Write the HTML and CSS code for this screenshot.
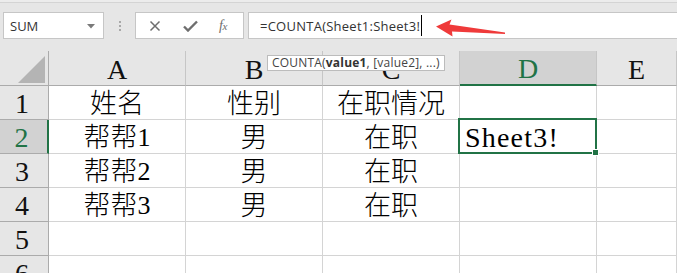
FILE: index.html
```html
<!DOCTYPE html>
<html lang="zh-CN">
<head>
<meta charset="utf-8">
<title>Excel COUNTA</title>
<link rel="stylesheet" href="styles.css">
</head>
<body>
<div class="app">
  <div class="topline"></div>
  <div class="toolbar">
    <div class="namebox">
      <span class="namebox-text">SUM</span>
      <svg class="dropdown" width="8" height="5" viewBox="0 0 8 5"><path d="M0 0H8L4 4.5Z" fill="#7a7a7a"/></svg>
    </div>
    <div class="grip"><i></i><i></i><i></i></div>
    <div class="fxbox">
      <svg class="btn-icon" width="12" height="12" viewBox="0 0 12 12"><path d="M1.5 1.5L10.5 10.5M10.5 1.5L1.5 10.5" stroke="#6e6e6e" stroke-width="1.5" fill="none"/></svg>
      <svg class="btn-icon" width="15" height="12" viewBox="0 0 15 12"><path d="M1 6.5L5 10.5L14 1.5" stroke="#6e6e6e" stroke-width="2.4" fill="none"/></svg>
      <span class="fx">f<span class="fx-x">x</span></span>
    </div>
    <div class="formula">
      <span class="formula-text">=COUNTA(Sheet1:Sheet3!</span><span class="caret"></span>
    </div>
  </div>

  <div class="sheet">
    <div class="hd corner"><span class="tri"></span></div>
    <div class="hd col">A</div>
    <div class="hd col">B</div>
    <div class="hd col">C</div>
    <div class="hd col active-col">D</div>
    <div class="hd col">E</div>

    <div class="hd row">1</div>
    <div class="cell c">姓名</div>
    <div class="cell c">性别</div>
    <div class="cell c">在职情况</div>
    <div class="cell"></div>
    <div class="cell"></div>

    <div class="hd row active-row">2</div>
    <div class="cell c">帮帮<span class="lat">1</span></div>
    <div class="cell c">男</div>
    <div class="cell c">在职</div>
    <div class="cell selected"><span class="edit">Sheet3!</span></div>
    <div class="cell"></div>

    <div class="hd row">3</div>
    <div class="cell c">帮帮<span class="lat">2</span></div>
    <div class="cell c">男</div>
    <div class="cell c">在职</div>
    <div class="cell"></div>
    <div class="cell"></div>

    <div class="hd row">4</div>
    <div class="cell c">帮帮<span class="lat">3</span></div>
    <div class="cell c">男</div>
    <div class="cell c">在职</div>
    <div class="cell"></div>
    <div class="cell"></div>

    <div class="hd row">5</div>
    <div class="cell"></div>
    <div class="cell"></div>
    <div class="cell"></div>
    <div class="cell"></div>
    <div class="cell"></div>

    <div class="hd row">6</div>
    <div class="cell"></div>
    <div class="cell"></div>
    <div class="cell"></div>
    <div class="cell"></div>
    <div class="cell"></div>
  </div>

  <div class="tooltip">COUNTA(<b>value1</b>, [value2], ...)</div>

  <svg class="arrow" width="80" height="24" viewBox="0 0 80 24">
    <path d="M0 7.5L15.5 0.5L13.5 5.5L69 13.5L69 15L16 12.5L16.5 17.5Z" fill="#ef3a3a"/>
  </svg>
</div>
</body>
</html>
```
FILE: styles.css
```css
* { box-sizing: border-box; }

html, body {
  margin: 0;
  padding: 0;
}

body {
  width: 677px;
  height: 273px;
  overflow: hidden;
  background: #ffffff;
  font-family: "Liberation Serif", "Noto Sans CJK SC", serif;
}

.app {
  position: relative;
  width: 677px;
  height: 273px;
  overflow: hidden;
}

.topline {
  height: 3px;
  background: #ececec;
  border-bottom: 1px solid #d4d4d4;
}

.toolbar {
  height: 48px;
  background: #e6e6e6;
  display: flex;
  align-items: flex-start;
  padding: 9px 0 0 3px;
}

.namebox {
  width: 101px;
  height: 27px;
  background: #fff;
  border: 1px solid #c6c6c6;
  display: flex;
  align-items: center;
  justify-content: space-between;
  padding: 0 8px 0 6px;
}

.namebox-text {
  font-family: "Open Sans", "Noto Sans", sans-serif;
  font-size: 13px;
  color: #333;
}

.dropdown { margin-top: 1px; }

.grip {
  width: 31px;
  height: 27px;
  display: flex;
  flex-direction: column;
  align-items: center;
  justify-content: center;
  gap: 2px;
}

.grip i {
  display: block;
  width: 2px;
  height: 2px;
  background: #a8a8a8;
}

.fxbox {
  width: 109px;
  height: 27px;
  background: #fff;
  border: 1px solid #c6c6c6;
  display: flex;
  align-items: center;
  padding-left: 12px;
  gap: 0;
}

.fxbox .btn-icon:first-child { margin-right: 22px; margin-left: 1px; }
.fxbox .btn-icon:nth-child(2) { margin-right: 21px; }

.fx {
  font-family: "Liberation Serif", serif;
  font-style: italic;
  font-size: 14px;
  color: #6e6e6e;
  letter-spacing: -0.5px;
}

.fx-x { font-size: 11px; }

.formula {
  flex: 1;
  height: 27px;
  margin-left: 4px;
  margin-right: -6px;
  background: #fff;
  border: 1px solid #c6c6c6;
  display: flex;
  align-items: center;
  padding-left: 11px;
}

.formula-text {
  font-family: "Open Sans", "Noto Sans", sans-serif;
  font-size: 13px;
  color: #333;
  letter-spacing: 0.25px;
}

.caret {
  display: block;
  width: 1px;
  height: 21px;
  background: #000;
  margin-left: 1px;
}

.sheet {
  display: grid;
  grid-template-columns: 49px 137px 137px 137px 137px 1fr;
  grid-template-rows: 35px repeat(6, 34px);
}

.hd {
  background: #e6e6e6;
  color: #111;
  font-size: 28px;
  line-height: 28px;
  display: flex;
  align-items: flex-end;
  justify-content: center;
  padding-bottom: 1px;
}

.hd.col {
  border-right: 1px solid #c6c6c6;
  border-bottom: 1px solid #ababab;
}

.hd.corner {
  border-right: 1px solid #ababab;
  border-bottom: 1px solid #ababab;
  position: relative;
}

.tri {
  position: absolute;
  right: 3px;
  bottom: 2px;
  width: 0;
  height: 0;
  border-left: 27px solid transparent;
  border-bottom: 27px solid #b4b4b4;
}

.hd.row {
  border-right: 1px solid #ababab;
  border-bottom: 1px solid #ababab;
  padding-right: 4px;
}

.active-col {
  background: #d2d2d2;
  color: #217346;
  border-bottom: 2px solid #217346 !important;
}

.active-row {
  background: #d2d2d2;
  color: #217346;
  border-right: 2px solid #217346 !important;
}

.cell {
  background: #fff;
  border-right: 1px solid #d4d4d4;
  border-bottom: 1px solid #d4d4d4;
  font-size: 27px;
  font-weight: 300;
  line-height: 28px;
  color: #000;
  display: flex;
  align-items: flex-end;
  padding-bottom: 1px;
  white-space: nowrap;
}

.cell.c { justify-content: center; }

.lat { font-size: 26px; font-weight: 400; }

.selected {
  position: relative;
  overflow: visible;
}

.selected::after {
  content: "";
  position: absolute;
  left: -2px;
  top: -2px;
  right: -1px;
  bottom: -1px;
  border: 2px solid #217346;
  pointer-events: none;
}

.selected::before {
  content: "";
  position: absolute;
  right: -3px;
  bottom: -3px;
  width: 5px;
  height: 5px;
  background: #217346;
  border: 1px solid #fff;
  z-index: 2;
}

.edit {
  font-size: 28px;
  font-weight: 400;
  letter-spacing: 1.2px;
  padding-left: 5px;
}

.tooltip {
  position: absolute;
  left: 267px;
  top: 55px;
  height: 16px;
  padding: 0 4px;
  background: #fff;
  border: 1px solid #bcbcbc;
  font-family: "Open Sans", "Noto Sans", sans-serif;
  font-size: 12px;
  line-height: 14px;
  letter-spacing: 0.2px;
  color: #444;
  white-space: nowrap;
}

.tooltip b { color: #333; }

.arrow {
  position: absolute;
  left: 436px;
  top: 19px;
}
```
